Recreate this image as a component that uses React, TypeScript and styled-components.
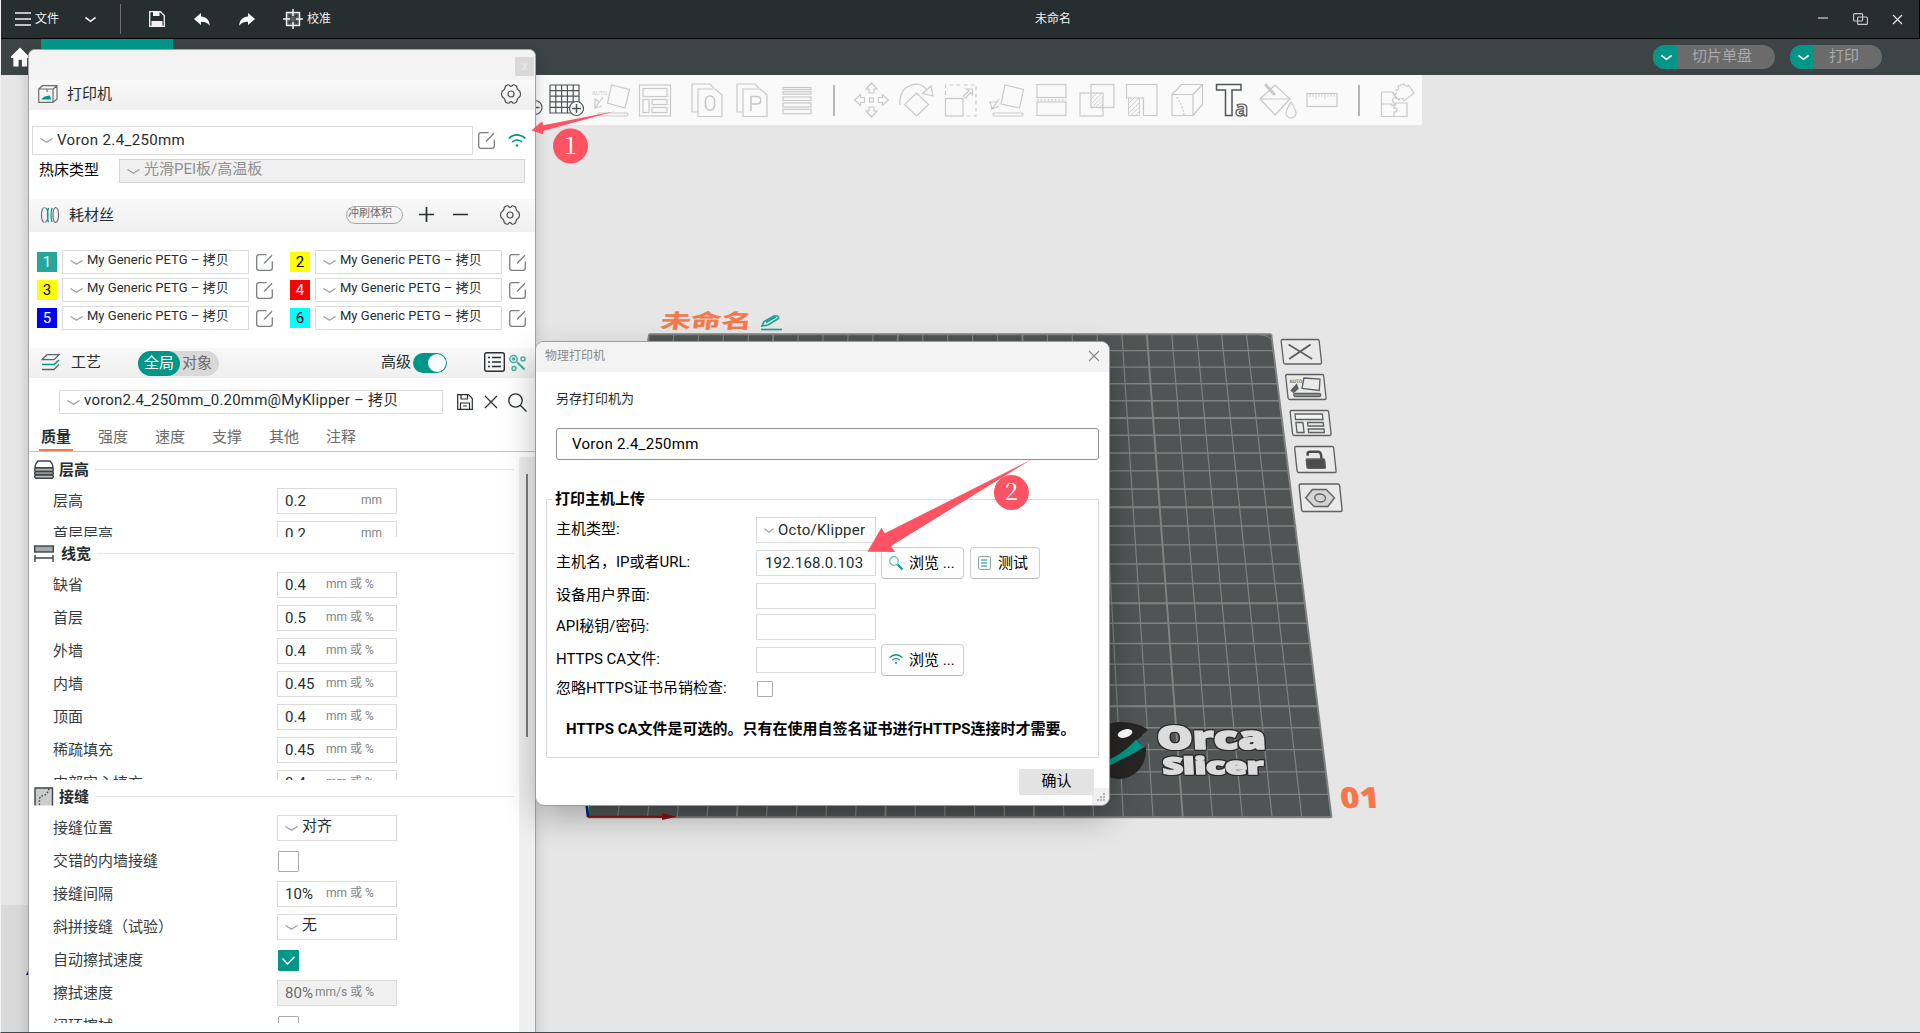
import React from "react";
import styled, { createGlobalStyle } from "styled-components";

const TEAL = "#009688";
const RED = "#ff5364";
const ORANGE = "#f4784a";

const Global = createGlobalStyle`
  * { box-sizing: border-box; }
  html, body { margin: 0; padding: 0; overflow: hidden; }
  body {
    font-family: Roboto, "Noto Sans CJK SC", sans-serif;
    font-size: 15px;
    line-height: 20px;
    color: #262e30;
    white-space: nowrap;
  }
`;

const Page = styled.div`
  position: relative;
  width: 1920px;
  height: 1033px;
  overflow: hidden;
  background: #e6e6e6;
  display: flex;
  flex-direction: column;
  border-left: 1px solid #f2f2f2;
  border-bottom: 1px solid #45484b;
`;

const Icon = styled.svg<{ $w: number; $h?: number }>`
  display: block;
  flex: none;
  width: ${(p) => p.$w}px;
  height: ${(p) => p.$h ?? p.$w}px;
  fill: none;
  stroke: currentColor;
  overflow: visible;
`;

const Gap = styled.div<{ $s: number }>`
  flex: none;
  width: ${(p) => p.$s}px;
`;
const VGap = styled.div<{ $s: number }>`
  flex: none;
  height: ${(p) => p.$s}px;
`;
const Grow = styled.div`
  flex: 1;
`;

const Txt = styled.span<{ $size?: number; $color?: string; $ls?: number; $bold?: boolean; $up?: number }>`
  font-size: ${(p) => p.$size ?? 15}px;
  color: ${(p) => p.$color ?? "inherit"};
  letter-spacing: ${(p) => p.$ls ?? 0}px;
  font-weight: ${(p) => (p.$bold ? 700 : 400)};
  padding-bottom: ${(p) => (p.$up ?? 0) * 2}px;
`;

/* ---------- Window title bar ---------- */

const TitleBar = styled.header`
  height: 39px;
  flex: none;
  display: flex;
  align-items: center;
  background: #272e30;
  border-bottom: 1px solid #000;
  border-right: 1px solid #000;
  color: #f2f2f2;
  font-size: 12px;
`;
const VRule = styled.div`
  width: 1px;
  height: 30px;
  background: #6c7274;
`;

const Chevron = ({ w = 12, c = "#a0a0a0", s = 1.2 }: { w?: number; c?: string; s?: number }) => (
  <Icon $w={w} $h={5} viewBox="0 0 12 5" preserveAspectRatio="none" style={{ color: c }}>
    <path d="M0.4 .5 Q3 2.2 6 4.3 Q9 2.2 11.6 .5" strokeWidth={s} />
  </Icon>
);

const AppTitleBar = () => (
  <TitleBar>
    <Gap $s={14} />
    <Icon $w={16} $h={14} viewBox="0 0 16 14">
      <path d="M0 1H16M0 7H16M0 13H16" strokeWidth="1.4" />
    </Icon>
    <Gap $s={4} />
    <Txt $size={12}>文件</Txt>
    <Gap $s={26} />
    <Chevron w={11} c="#eee" s={1.5} />
    <Gap $s={24} />
    <VRule />
    <Gap $s={28} />
    <Icon $w={16} viewBox="0 0 16 16">
      <path d="M.7 .7H11.5L15.3 4.5V15.3H.7Z" strokeWidth="1.3" />
      <path d="M4 .7H10.500V5H4ZM2.500 10H13.500V15H2.500Z" fill="#f2f2f2" stroke="none" />
    </Icon>
    <Gap $s={29} />
    <Icon $w={16} $h={13} viewBox="0 0 16 13">
      <path d="M7 0V3.6C12 3.8 15.5 7 15.8 12.8C13.8 9.6 11 8.6 7 8.7V12L0 6Z" fill="#fff" stroke="none" />
    </Icon>
    <Gap $s={29} />
    <Icon $w={16} $h={13} viewBox="0 0 16 13">
      <path d="M9 0V3.6C4 3.8 .5 7 .2 12.8C2.2 9.6 5 8.6 9 8.7V12L16 6Z" fill="#fff" stroke="none" />
    </Icon>
    <Gap $s={28} />
    <Icon $w={20} viewBox="0 0 20 20">
      <rect x="3.5" y="3.5" width="13" height="13" fill="#565b5c" strokeWidth="1.4" />
      <path d="M10 0V7M10 13V20M0 10H7M13 10H20" strokeWidth="1.5" />
      <path d="M6 6L8 8M14 6L12 8M6 14L8 12M14 14L12 12" strokeWidth="1.4" stroke="#272e30" />
    </Icon>
    <Gap $s={4} />
    <Txt $size={12}>校准</Txt>
    <Gap $s={704} />
    <Txt $size={12}>未命名</Txt>
    <Grow />
    <Icon $w={10} $h={2} viewBox="0 0 10 2">
      <path d="M0 0H10" strokeWidth="1" />
    </Icon>
    <Gap $s={25} />
    <Icon $w={15} $h={12} viewBox="0 0 15 12" style={{ color: "#c9cccc" }}>
      <rect x=".6" y=".6" width="9" height="7.4" rx="1" strokeWidth="1.1" />
      <rect x="4.6" y="4" width="9.8" height="7.4" rx="1" strokeWidth="1.1" />
    </Icon>
    <Gap $s={25} />
    <Icon $w={9} viewBox="0 0 9 9">
      <path d="M0 0L9 9M9 0L0 9" strokeWidth="1.1" />
    </Icon>
    <Gap $s={17} />
  </TitleBar>
);

/* ---------- Navigation bar ---------- */

const NavBar = styled.nav`
  height: 36px;
  flex: none;
  display: flex;
  align-items: center;
  background: #3c4446;
  padding-left: 10px;
  padding-right: 38px;
`;
const ActiveTab = styled.div`
  width: 132px;
  height: 36px;
  margin-left: 12px;
  background: ${TEAL};
`;
const Pill = styled.div<{ $w: number }>`
  width: ${(p) => p.$w}px;
  height: 24px;
  margin-left: 15px;
  display: flex;
  border-radius: 12px;
  overflow: hidden;
  background: #6b6b6b;
  color: #a9a9a9;
`;
const PillArrow = styled.div`
  width: 24px;
  display: grid;
  place-items: center;
  background: ${TEAL};
  padding-left: 3px;
`;
const PillText = styled.div`
  flex: 1;
  line-height: 23px;
  text-align: center;
  padding-right: 8px;
`;

const AppNav = () => (
  <NavBar>
    <Icon $w={18} $h={20} viewBox="0 0 19 20">
      <path d="M9.5 0L19 9.5V11H17V20H11.5V13H8V20H2.5V11H0V9.5Z" fill="#fff" stroke="none" />
    </Icon>
    <ActiveTab />
    <Icon $w={330} $h={36} viewBox="172 0 330 36" style={{ color: "#b9bdbd" }}>
      <path d="M85 10.500H88M111 10.500H117M125 10.500H128M217 10.500H220M257 10.500H259M261 10.500H263M342 10.500H351M355 10.500H360M390 10.500H392M475 10.500H491" strokeWidth="1" />
    </Icon>
    <Grow />
    <Pill $w={122}>
      <PillArrow>
        <Chevron w={11} c="#fff" s={1.5} />
      </PillArrow>
      <PillText>切片单盘</PillText>
    </Pill>
    <Pill $w={92}>
      <PillArrow>
        <Chevron w={11} c="#fff" s={1.5} />
      </PillArrow>
      <PillText>打印</PillText>
    </Pill>
  </NavBar>
);

/* ---------- Canvas toolbar ---------- */

const Toolbar = styled.div`
  position: relative;
  z-index: 1;
  height: 50px;
  width: 1221px;
  margin-left: 200px;
  flex: none;
  display: flex;
  align-items: center;
  background: #fafafa;
  padding-left: 326px;
`;
const Tool = styled.div<{ $on?: boolean }>`
  width: 45px;
  height: 50px;
  flex: none;
  display: grid;
  place-items: center;
  color: ${(p) => (p.$on ? "#4f5557" : "#c9c9c9")};
`;
const ToolRule = styled.div`
  width: 2px;
  height: 31px;
  margin: 0 14px;
  flex: none;
  background: #b3b7b7;
`;
const ToolIcon = ({ children, on }: { children: React.ReactNode; on?: boolean }) => (
  <Tool $on={on}>
    <Icon $w={36} viewBox="0 0 36 36" strokeWidth="1.2">
      {children}
    </Icon>
  </Tool>
);

const AppToolbar = () => (
  <Toolbar>
    <Icon $w={15} viewBox="0 0 15 15" strokeWidth="1.200" style={{ color: "#4f5557" }}>
      <circle cx="8" cy="14.500" r="7" />
      <path d="M3.500 14.500H12.500" strokeWidth="1.500" />
    </Icon>
    <ToolIcon on>
      <path d="M3 3H32V22M3 3V31H24M3 8.6H32M3 14.2H32M3 19.8H27M3 25.4H22M8.8 3V31M14.6 3V31M20.4 3V31M26.2 3V20" />
      <circle cx="29.5" cy="26.5" r="7" fill="#fafafa" />
      <path d="M29.5 22V31M25 26.5H34" strokeWidth="1.5" />
    </ToolIcon>
    <ToolIcon>
      <path d="M19.500 3L37.500 7.5L33 26L15.500 21ZM11 15L3 26L10 24M3 26V17L7 20" />
      <rect x="6" y="31" width="30" height="3" rx="1.5" />
      <text x="0" y="13" fontSize="6" fill="currentColor" stroke="none" fontWeight="400">AUTO</text>
    </ToolIcon>
    <ToolIcon>
      <rect x="2.5" y="3" width="31" height="31" />
      <rect x="6" y="6.5" width="24" height="8" />
      <rect x="6" y="17.5" width="6" height="13" />
      <rect x="15" y="17.5" width="15" height="5" />
      <rect x="15" y="25.5" width="15" height="5" />
    </ToolIcon>
    <Gap $s={7} />
    <ToolIcon>
      <path d="M3 2V30H9M3 2H21L25 6" />
      <path d="M9 7H26.5L33 13V34.5H9Z" />
      <rect x="16.5" y="14" width="9" height="14" rx="4.5" strokeWidth="1.6" />
    </ToolIcon>
    <ToolIcon>
      <path d="M3 2H21L25 6M3 2V30H9" />
      <path d="M9 7H26.5L33 13V34.5H9Z" />
      <path d="M17 29V14.5H23C28 14.5 28 22 23 22H17" strokeWidth="1.6" />
    </ToolIcon>
    <ToolIcon>
      <rect x="4" y="5.500" width="28" height="2" />
      <rect x="4" y="9.800" width="28" height="2.400" />
      <rect x="4" y="15" width="28" height="3.500" />
      <rect x="4" y="21" width="28" height="4" />
      <rect x="4" y="27.300" width="28" height="4.400" />
    </ToolIcon>
    <ToolRule />
    <ToolIcon>
      <path d="M17.500 1L23 7H20V11H15V7H12ZM17.500 35L23 29H20V25H15V29H12ZM.500 18L6.500 12.500V15.500H10.500V20.500H6.500V23.500ZM34.500 18L28.500 12.500V15.500H24.500V20.500H28.500V23.500Z" />
      <rect x="15.500" y="16" width="4" height="4" />
    </ToolIcon>
    <ToolIcon>
      <path d="M17.500 11L29.500 22.500L17.500 34L5.500 22.500ZM1 23V17C3 3 20 -3 28 8M23.500 11.500L34 14L32 4Z" />
    </ToolIcon>
    <ToolIcon>
      <rect x="1.500" y="16.500" width="17.500" height="17.500" />
      <path d="M1.500 13V3H32V34H22" strokeDasharray="4 3" />
      <path d="M19.500 14L25 8.500L22.500 7H28.500V13L26.500 10.500L21.500 16Z" />
    </ToolIcon>
    <ToolIcon>
      <path d="M16 3L34.500 7.500L30.500 26L12 22Z" />
      <path d="M10 17L3 27L10 24M3 27L1 20H9" />
      <rect x="4" y="31" width="30" height="3" rx="1.500" />
    </ToolIcon>
    <ToolIcon>
      <rect x="3" y="2.500" width="29" height="13" />
      <rect x="3" y="20" width="29" height="13.500" />
      <path d="M3 17.800H32" strokeDasharray="2 1.500" />
    </ToolIcon>
    <ToolIcon>
      <rect x="1" y="11" width="23" height="23" />
      <rect x="12" y="2.500" width="23" height="23" />
      <path d="M13 16L18 11M13 21L23 11M13 25L23.500 15M17 25L23.500 19M21 25L24 22" strokeWidth=".8" />
    </ToolIcon>
    <ToolIcon>
      <path d="M2.500 2.500H33V33.500H19.500V16H2.500Z" />
      <path d="M4.500 16V33.500H15.500V16M5 21L10 16M5 26L15 16M5 31L15 21M7 33L15 26M12 33L15 30" strokeWidth=".9" />
    </ToolIcon>
    <ToolIcon>
      <path d="M3 12.500H24V33.500H3ZM3 12.500L12.500 2.500H33.500L24 12.500M33.500 2.500V22.500L24 33.500" />
      <path d="M8 15L10 19L12 22L14 28L15 33" strokeDasharray="2 1.500" />
    </ToolIcon>
    <ToolIcon on>
      <path d="M2.500 2.500H27V8H18V33.500H11.500V8H2.500Z" strokeWidth="1.500" />
      <text x="21" y="33.500" fontSize="22" fontWeight="700" fill="#fafafa" strokeWidth="1.200" fontFamily="Open Sans">a</text>
    </ToolIcon>
    <ToolIcon>
      <path d="M1 17L16 3L31 17L16 33ZM1 17H31" />
      <path d="M6 2L16 13" strokeWidth="3" />
      <path d="M32 20C36 26 37 28 37 31A5 5 0 0 1 27 31C27 28 29 25 32 20Z" fill="#fafafa" />
    </ToolIcon>
    <ToolIcon>
      <rect x="3" y="11.500" width="30" height="13" />
      <path d="M6 12V15M9 12V15M12 12V17M15 12V15M18 12V15M21 12V17M24 12V15M27 12V15M30 12V15" strokeWidth=".9" />
    </ToolIcon>
    <ToolRule />
    <ToolIcon>
      <path d="M2.500 10H14C13 14 18 14 17 10M2.500 10V34.500H28V21H17C17 24 12 24 12 22H2.500M15 34.500V30C19 30 19 25 15 26V21C12 18 14 15 17 16L14 10" />
      <path d="M16 8C18 9 21 7 19 4L25 2C27 6 30 4 29 2.500L35 11L25 19C24 15 20 16 20 18L15 13" />
    </ToolIcon>
  </Toolbar>
);

/* ---------- 3D scene ---------- */

const Scene = styled.svg`
  position: absolute;
  left: -1px;
  top: 0;
  width: 1920px;
  height: 1033px;
`;

const BED = { tl: 649, tr: 1271.3, bl: 588, br: 1331.5, top: 334.3, bottom: 817.3 };
const CELLS = 25;
const rowY = (i: number) => {
  const s = i / CELLS;
  return BED.top + (BED.bottom - BED.top) * (s / ((1 - s) * 1.194 + s));
};
const edge = (y: number, a: number, b: number) => a + ((b - a) * (y - BED.top)) / (BED.bottom - BED.top);
const lines = Array.from({ length: CELLS + 1 }, (_, i) => i);

const PlateButton = ({ x, y, w, h, children }: { x: number; y: number; w: number; h: number; children: React.ReactNode }) => (
  <g transform={`matrix(${w / 38} 0 ${0.11} ${h / 25} ${x} ${y})`} fill="none" stroke="#5e6061" strokeWidth="1.3">
    <rect x="0" y="0" width="38" height="25" rx="1.5" fill="#eaeaea" />
    {children}
  </g>
);

const Logo = () => (
  <>
    <text transform="translate(1157.500 749) skewX(3)" fontSize="32" textLength="109" lengthAdjust="spacingAndGlyphs">Orca</text>
    <text transform="translate(1163 774) skewX(3)" fontSize="23" textLength="101" lengthAdjust="spacingAndGlyphs">Slicer</text>
  </>
);

const Plate = () => (
  <Scene viewBox="0 0 1920 1033">
    <rect x="1" y="905" width="28" height="127" fill="#d9d9d9" />
    <path d="M26 975L30 967V975Z" fill="#0018b0" />
    <path d={`M${BED.tl} ${BED.top}H${BED.tr}L${BED.br} ${BED.bottom}H${BED.bl}Z`} fill="#505455" />
    <g stroke="#7f8480" fill="none">
      {lines.map((i) => {
        const y = rowY(i);
        return (
          <path key={"h" + i} d={`M${edge(y, BED.tl, BED.bl)} ${y}H${edge(y, BED.tr, BED.br)}`} strokeWidth={i % 5 ? 1.4 : 2} />
        );
      })}
      {lines.map((i) => (
        <path
          key={"v" + i}
          d={`M${BED.tl + ((BED.tr - BED.tl) * i) / CELLS} ${BED.top}L${BED.bl + ((BED.br - BED.bl) * i) / CELLS} ${BED.bottom}`}
          strokeWidth={i % 5 ? 1.2 : 1.9}
        />
      ))}
      <path d="M1258 334.500Q1269 335 1272.500 341" strokeWidth="1" />
    </g>

    <ellipse cx="1119" cy="750.500" rx="27" ry="28.500" fill="#272524" />
    <path d="M1119 722C1132 722 1142 725 1148.500 730L1136 739L1125 742Z" fill="#272524" />
    <path d="M1149 730L1137 740L1143.500 748L1150 742Z" fill="#505455" />
    <path d="M1136 739.500L1143.500 747.500C1132 755 1120 759 1108 767V760C1118 756 1130 747 1136 739.500Z" fill={TEAL} />
    <ellipse cx="1125" cy="733.500" rx="7.500" ry="4" fill="#fff" transform="rotate(-16 1125 733.500)" />
    <g
      fontFamily="Open Sans"
      fontWeight="800"
      fill="#dcdcdc"
      stroke="#dcdcdc"
      strokeWidth="1.600"
      style={{ filter: "drop-shadow(1px 0 0 #2b2b2b) drop-shadow(-1px 0 0 #2b2b2b) drop-shadow(0 1px 0 #2b2b2b) drop-shadow(0 -1px 0 #2b2b2b)" }}
    >
      <Logo />
    </g>
    <text transform="translate(1341 808) skewX(5)" fontFamily="Open Sans" fontWeight="800" fontSize="29" fill={ORANGE} textLength="39" lengthAdjust="spacingAndGlyphs">01</text>

    <text transform="translate(660 327.500) skewX(-7) scale(1 .7)" fontFamily="Noto Sans CJK SC" fontWeight="700" fontSize="28" fill={ORANGE} stroke={ORANGE} strokeWidth=".4" textLength="91" lengthAdjust="spacingAndGlyphs">未命名</text>
    <g fill="none" stroke="#1fa294" strokeWidth="1.700">
      <path d="M761 329.500H782" />
      <path d="M762 326L764 321.500L774 316Q779 315 778.500 318.500L768 325ZM766 322.500L776 316.800" />
    </g>

    <path d="M588 817L585.500 795" stroke="#001a8c" strokeWidth="2.500" />
    <path d="M590 815V800" stroke="#0b8a1c" strokeWidth="1.500" />
    <path d="M588 816.800H664" stroke="#8c0f0f" strokeWidth="2" />
    <path d="M662 813L677 816.800L662 820Z" fill="#8c0f0f" />

    <PlateButton x={1281} y={339.5} w={38} h={24.500}>
      <path d="M7 5L29 20M29 5L6 20" strokeWidth="1.800" />
    </PlateButton>
    <PlateButton x={1285.500} y={374.500} w={38} h={25}>
      <path d="M18 3.500L34 4.500L32 16L15 14Z" />
      <path d="M4 16L10 10L11 14L6 18Z" fill="#5e6061" />
      <rect x="6" y="19" width="27" height="3" rx="1.500" fill="#999" />
      <text x="3" y="9" fontSize="5" fill="#777" stroke="none" fontWeight="700">AUTO</text>
    </PlateButton>
    <PlateButton x={1290} y={410.500} w={38.500} h={25}>
      <rect x="4.500" y="3.500" width="27" height="5.500" fill="#f4f4f4" />
      <rect x="4.500" y="12" width="7" height="10" />
      <rect x="16" y="12" width="15.500" height="3.500" />
      <rect x="16" y="18.500" width="15.500" height="3.500" />
    </PlateButton>
    <PlateButton x={1294.500} y={446.500} w={39} h={26}>
      <rect x="10" y="12" width="18" height="9" rx="1" fill="#4a4c4d" />
      <path d="M12 9V7Q12 5 15 5H22Q25 5 25 8V12" strokeWidth="2.400" stroke="#4a4c4d" />
    </PlateButton>
    <PlateButton x={1299} y={484} w={40.500} h={27.500}>
      <path d="M12 5H25L32 12.500L25 20.500H12L5 12.500Z" fill="#d4d4d4" />
      <ellipse cx="18.500" cy="12.700" rx="5" ry="3.600" />
    </PlateButton>
  </Scene>
);

/* ---------- Settings panel ---------- */

const Panel = styled.aside`
  position: absolute;
  z-index: 2;
  left: 27px;
  top: 49px;
  width: 508px;
  height: 983px;
  display: flex;
  flex-direction: column;
  overflow: hidden;
  background: #fff;
  border: 1px solid #a3a3a3;
  border-bottom: 0;
  border-radius: 7px 7px 0 0;
`;
const PanelShadow = styled.div`
  position: absolute;
  z-index: 1;
  left: 28px;
  top: 56px;
  width: 506px;
  height: 990px;
  box-shadow: 0 0 14px rgba(0, 0, 0, 0.2);
`;
const PanelTitle = styled.div`
  height: 30px;
  flex: none;
  display: flex;
  justify-content: flex-end;
  padding: 7px 1px 0 0;
  background: #f3f3f3;
`;
const PanelClose = styled.div`
  width: 19px;
  height: 19px;
  background: #d9d9d9;
  color: #ededed;
  font-size: 12px;
  line-height: 18px;
  text-align: center;
`;
const Head = styled.div<{ $h: number }>`
  height: ${(p) => p.$h}px;
  flex: none;
  display: flex;
  align-items: center;
  padding-bottom: 2px;
  background: linear-gradient(#f9f9f9, #efefef);
`;
const Line = styled.div`
  flex: none;
  display: flex;
  align-items: center;
`;
const Combo = styled.div<{ $w: number; $h: number; $off?: boolean }>`
  width: ${(p) => p.$w}px;
  height: ${(p) => p.$h}px;
  flex: none;
  display: flex;
  align-items: center;
  padding-left: 7px;
  gap: 4px;
  border: 1px solid ${(p) => (p.$off ? "#d6d6d6" : "#dbdbdb")};
  background: ${(p) => (p.$off ? "#f0f0f0" : "#fff")};
  color: ${(p) => (p.$off ? "#909090" : "#262e30")};
`;
const Swatch = styled.div<{ $bg: string; $fg: string }>`
  width: 20px;
  height: 20px;
  line-height: 20px;
  text-align: center;
  font-size: 15px;
  background: ${(p) => p.$bg};
  color: ${(p) => p.$fg};
`;
const PurgeButton = styled.div`
  width: 57px;
  height: 18px;
  border: 1px solid #a6a6a6;
  border-radius: 9px;
  font-size: 11px;
  line-height: 13px;
  padding-left: 1px;
  color: #6b6b6b;
`;
const Segment = styled.div`
  width: 81px;
  height: 25px;
  margin-top: 2px;
  display: flex;
  border-radius: 13px;
  background: #d9d9d9;
  color: #6b6b6b;
  line-height: 24px;
`;
const SegmentOn = styled.div`
  width: 42px;
  margin-right: 2px;
  border-radius: 13px;
  background: ${TEAL};
  color: #fff;
  text-align: center;
`;
const Switch = styled.div`
  width: 34px;
  height: 20px;
  margin-top: 2px;
  padding: 1px;
  display: flex;
  justify-content: flex-end;
  border-radius: 10px;
  background: ${TEAL};
  &::after {
    content: "";
    width: 18px;
    height: 18px;
    border-radius: 9px;
    background: #fff;
  }
`;

const Gear = () => (
  <Icon $w={20} viewBox="0 0 20 20" strokeWidth="1.200" style={{ color: "#4a4f50" }}>
    <path d="M6.300 1Q8 .200 8.700 1.800Q10 2.800 11.300 1.800Q12 .200 13.700 1L15.600 2.200Q16 4.800 17 5.700Q19.600 7 19.500 10Q19.600 13 17 14.300Q16 15.200 15.600 17.800L13.700 19Q12 19.800 11.300 18.200Q10 17.200 8.700 18.200Q8 19.800 6.300 19L4.400 17.800Q4 15.200 3 14.300Q.400 13 .500 10Q.400 7 3 5.700Q4 4.800 4.400 2.200Z" />
    <circle cx="10" cy="10" r="3" />
  </Icon>
);
const EditIcon = () => (
  <Icon $w={17} viewBox="0 0 17 17" strokeWidth="1.300" style={{ color: "#7a7e7f" }}>
    <path d="M10.500 .700H3Q.700 .700 .700 3V14Q.700 16.300 3 16.300H14Q16.300 16.300 16.300 14V7.500" />
    <path d="M8 9.500L16 1.200" />
  </Icon>
);
const Wifi = ({ w = 18 }: { w?: number }) => (
  <Icon $w={w} $h={(w * 13) / 18} viewBox="0 0 18 13" strokeWidth="1.600" style={{ color: TEAL }}>
    <path d="M.600 4.500Q9 -2.600 17.400 4.500M4 8Q9 4 14 8" />
    <circle cx="9" cy="11.500" r="1.200" fill={TEAL} stroke="none" />
  </Icon>
);

const FILAMENTS: [string, string][] = [
  ["#26a69a", "#fff"],
  ["#ffff00", "#000"],
  ["#ffff00", "#000"],
  ["#ff0000", "#fff"],
  ["#0000ff", "#fff"],
  ["#00ffff", "#000"],
];
const FilamentGrid = styled.div`
  flex: none;
  display: grid;
  grid-template-columns: 253px 253px;
  grid-auto-rows: 28px;
  padding-left: 8px;
`;
const FilamentCell = styled.div`
  height: 24px;
  display: flex;
  align-items: center;
`;

const TabRow = styled.div`
  height: 38px;
  flex: none;
  display: flex;
  padding: 9px 0 0 10px;
  gap: 23px;
  border-bottom: 1px solid #c4c4c4;
`;
const Tab = styled.div<{ $on?: boolean }>`
  width: 34px;
  height: 28px;
  line-height: 29px;
  padding-left: 2px;
  color: ${(p) => (p.$on ? "#262e30" : "#6b6b6b")};
  font-weight: ${(p) => (p.$on ? 700 : 400)};
  border-bottom: 2px solid ${(p) => (p.$on ? ORANGE : "transparent")};
`;

const Settings = styled.div`
  flex: 1;
  min-height: 0;
  display: flex;
`;
const Sections = styled.div`
  width: 490px;
  display: flex;
  flex-direction: column;
  padding-top: 1px;
`;
const Track = styled.div`
  width: 16px;
  margin-top: 5px;
  background: #efefef;
  padding: 17px 0 0 7px;
`;
const Thumb = styled.div`
  width: 2px;
  height: 263px;
  background: #7c7c7c;
`;
const SectionHead = styled.div`
  height: 32px;
  flex: none;
  display: flex;
  align-items: center;
  padding: 1px 5px 0;
`;
const SectionRule = styled.div`
  flex: 1;
  height: 1px;
  margin-left: 6px;
  background: #e6e6e6;
`;
const SectionBody = styled.div<{ $h: number }>`
  height: ${(p) => p.$h}px;
  flex: none;
  overflow: hidden;
`;
const Option = styled.div`
  height: 33px;
  display: flex;
  align-items: center;
  padding: 0 0 1px 24px;
`;
const OptionLabel = styled.div`
  width: 224px;
  color: #363c3e;
`;
const Field = styled.div<{ $off?: boolean }>`
  width: 120px;
  height: 26px;
  display: flex;
  align-items: center;
  padding-left: 7px;
  border: 1px solid #dbdbdb;
  background: ${(p) => (p.$off ? "#f0f0f0" : "#fff")};
  color: ${(p) => (p.$off ? "#6b6b6b" : "#262e30")};
`;
const FieldValue = styled.div<{ $w: number }>`
  width: ${(p) => p.$w}px;
  letter-spacing: 0.1px;
`;
const Unit = styled.div`
  color: #808486;
  font-size: 12px;
  padding-bottom: 3px;
`;
const Check = styled.div<{ $on?: boolean; $s?: number }>`
  width: ${(p) => p.$s ?? 21}px;
  height: ${(p) => p.$s ?? 21}px;
  margin-left: 1px;
  display: grid;
  place-items: center;
  border: 1px solid ${(p) => (p.$on ? TEAL : "#ababab")};
  border-radius: 1px;
  background: ${(p) => (p.$on ? TEAL : "#fff")};
  color: #fff;
`;

type Opt = { label: string; value?: string; unit?: string; kind?: "combo" | "check" | "on" | "off" };
const OptionRow = ({ label, value, unit = "mm 或 %", kind }: Opt) => (
  <Option>
    <OptionLabel>{label}</OptionLabel>
    {kind === "combo" ? (
      <Combo $w={120} $h={26}>
        <Chevron w={13} />
        <Txt $up={2}>{value}</Txt>
      </Combo>
    ) : kind === "check" ? (
      <Check />
    ) : kind === "on" ? (
      <Check $on>
        <Icon $w={13} $h={9} viewBox="0 0 13 9">
          <path d="M.500 2.500L5.500 8L12.500 .800" strokeWidth="1.500" />
        </Icon>
      </Check>
    ) : (
      <Field $off={kind === "off"}>
        <FieldValue $w={unit === "mm" ? 76 : kind === "off" ? 30 : 41}>{value}</FieldValue>
        <Unit>{unit}</Unit>
      </Field>
    )}
  </Option>
);

const SECTIONS: { title: string; height: number; icon: React.ReactNode; gap: number; rows: Opt[] }[] = [
  {
    title: "层高",
    height: 52,
    gap: 5,
    icon: (
      <>
        <path d="M1 8Q1 4 4 1H16Q19 4 19 8Z" />
        <rect x=".700" y="8" width="18.600" height="3.500" rx="1.500" fill="#bbb" />
        <rect x=".700" y="11.500" width="18.600" height="3.500" rx="1.500" fill="#999" />
        <rect x=".700" y="15" width="18.600" height="3.300" rx="1.500" fill="#bbb" />
      </>
    ),
    rows: [
      { label: "层高", value: "0.2", unit: "mm" },
      { label: "首层层高", value: "0.2", unit: "mm" },
    ],
  },
  {
    title: "线宽",
    height: 211,
    gap: 7,
    icon: (
      <>
        <rect x=".700" y="2" width="18.600" height="6" fill="#a5a8a9" />
        <path d="M1 11V18M19 11V18M1 14H19" />
      </>
    ),
    rows: [
      { label: "缺省", value: "0.4" },
      { label: "首层", value: "0.5" },
      { label: "外墙", value: "0.4" },
      { label: "内墙", value: "0.45" },
      { label: "顶面", value: "0.4" },
      { label: "稀疏填充", value: "0.45" },
      { label: "内部实心填充", value: "0.4" },
    ],
  },
  {
    title: "接缝",
    height: 211,
    gap: 5,
    icon: (
      <>
        <path d="M1 18.500V1H18.500V18.500" fill="#ccc" />
        <path d="M5.500 18V12Q6 9 9.500 8.500Q14 7 15 1.500" strokeDasharray="1.600 1.600" />
      </>
    ),
    rows: [
      { label: "接缝位置", value: "对齐", kind: "combo" },
      { label: "交错的内墙接缝", kind: "check" },
      { label: "接缝间隔", value: "10%" },
      { label: "斜拼接缝（试验）", value: "无", kind: "combo" },
      { label: "自动擦拭速度", kind: "on" },
      { label: "擦拭速度", value: "80%", unit: "mm/s 或 %", kind: "off" },
      { label: "闭环擦拭", kind: "check" },
    ],
  },
];

const SettingsPanel = () => (
  <>
    <PanelShadow />
    <Panel>
      <PanelTitle>
        <PanelClose>x</PanelClose>
      </PanelTitle>
      <Head $h={30}>
        <Gap $s={9} />
        <Icon $w={20} $h={18} viewBox="0 0 20 18" strokeWidth="1.200" style={{ color: "#6b6f70" }}>
          <path d="M.700 4H15V17.300H.700ZM.700 4L4.500 .700H19V14L15 17.300M15 4L19 .700M9 4V7" />
          <path d="M3.500 14.500Q5 11 12 10.500L13 14.500Z" fill={TEAL} stroke="none" />
        </Icon>
        <Gap $s={9} />
        <Txt>打印机</Txt>
        <Grow />
        <Gear />
        <Gap $s={14} />
      </Head>
      <VGap $s={16} />
      <Line>
        <Gap $s={3} />
        <Combo $w={441} $h={29}>
          <Chevron w={13} />
          <Txt $ls={0.38} $up={1}>Voron 2.4_250mm</Txt>
        </Combo>
        <Gap $s={5} />
        <EditIcon />
        <Gap $s={13} />
        <Wifi />
      </Line>
      <VGap $s={4} />
      <Line>
        <Gap $s={10} />
        <Txt $color="#000" $up={1}>热床类型</Txt>
        <Gap $s={20} />
        <Combo $w={406} $h={24} $off>
          <Chevron w={13} />
          <Txt $up={2}>光滑PEI板/高温板</Txt>
        </Combo>
      </Line>
      <VGap $s={16} />
      <Head $h={33}>
        <Gap $s={12} />
        <Icon $w={18} $h={16} viewBox="0 0 18 16" strokeWidth="1.200" style={{ color: "#6b6f70" }}>
          <path d="M3.500 .500Q.500 1 .500 8Q.500 15 3.500 15.500M14.500 .500Q17.500 1 17.500 8Q17.500 15 14.500 15.500Q12 15 12 8Q12 1 14.500 .500" />
          <path d="M4.500 .800Q7 2 7 8Q7 14 4.500 15.200M7.500 .800Q5.500 8 7.500 15.200M11 .800Q9 8 11 15.200" stroke={TEAL} />
        </Icon>
        <Gap $s={10} />
        <Txt>耗材丝</Txt>
        <Grow />
        <PurgeButton>冲刷体积</PurgeButton>
        <Gap $s={16} />
        <Icon $w={15} viewBox="0 0 15 15" strokeWidth="1.700">
          <path d="M0 7.500H15M7.500 0V15" />
        </Icon>
        <Gap $s={19} />
        <Icon $w={15} viewBox="0 0 15 15" strokeWidth="1.700">
          <path d="M0 7.500H15" />
        </Icon>
        <Gap $s={32} />
        <Gear />
        <Gap $s={15} />
      </Head>
      <VGap $s={18} />
      <FilamentGrid>
        {FILAMENTS.map(([bg, fg], i) => (
          <FilamentCell key={i}>
            <Swatch $bg={bg} $fg={fg}>{i + 1}</Swatch>
            <Gap $s={5} />
            <Combo $w={187} $h={24}>
              <Chevron w={13} />
              <Txt $size={13} $ls={0.02} $up={2}>My Generic PETG – 拷贝</Txt>
            </Combo>
            <Gap $s={7} />
            <EditIcon />
          </FilamentCell>
        ))}
      </FilamentGrid>
      <VGap $s={14} />
      <Head $h={30}>
        <Gap $s={12} />
        <Icon $w={19} $h={17} viewBox="0 0 19 17" strokeWidth="1.300" style={{ color: "#5e6465" }}>
          <path d="M6 .700H18L13 5.700H1Z" />
          <path d="M1 10.500H13L18 6" stroke={TEAL} strokeWidth="1.600" />
          <path d="M1 15.500H13L18 10.500" />
        </Icon>
        <Gap $s={11} />
        <Txt>工艺</Txt>
        <Gap $s={37} />
        <Segment>
          <SegmentOn>全局</SegmentOn>对象
        </Segment>
        <Grow />
        <Txt>高级</Txt>
        <Gap $s={2} />
        <Switch />
        <Gap $s={37} />
        <Icon $w={21} $h={20} viewBox="0 0 21 20" strokeWidth="1.400">
          <rect x=".700" y=".700" width="19.600" height="18.600" rx="2" />
          <path d="M4 5.500H6M8 5.500H17M4 10H6M8 10H17M4 14.500H6M8 14.500H17" />
        </Icon>
        <Gap $s={4} />
        <Icon $w={17} viewBox="0 0 17 17" strokeWidth="1.500" style={{ color: "#45b0a6" }}>
          <circle cx="4.500" cy="5" r="3.600" />
          <circle cx="4.500" cy="5" r="1" />
          <circle cx="14" cy="5" r="2" />
          <circle cx="5" cy="14.500" r="2" />
          <path d="M8 8L15.500 15.500" strokeWidth="2.200" />
        </Icon>
        <Gap $s={9} />
      </Head>
      <VGap $s={12} />
      <Line>
        <Gap $s={30} />
        <Combo $w={384} $h={24}>
          <Chevron w={13} />
          <Txt $ls={0.22} $up={2}>voron2.4_250mm_0.20mm@MyKlipper – 拷贝</Txt>
        </Combo>
        <Gap $s={14} />
        <Icon $w={16} viewBox="0 0 16 16" strokeWidth="1.200">
          <path d="M.700 .700H11.500L15.300 4.500V15.300H.700ZM4 .700V5H10.500V.700M3.500 15.300V9H12.500V15.300M6 12H10" />
        </Icon>
        <Gap $s={12} />
        <Icon $w={12} viewBox="0 0 13 13" strokeWidth="1.300">
          <path d="M0 0L13 13M13 0L0 13" />
        </Icon>
        <Gap $s={11} />
        <Icon $w={19} viewBox="0 0 19 19" strokeWidth="1.300">
          <circle cx="7.500" cy="7.500" r="6.700" />
          <path d="M12.300 12.300L18.500 18.500" />
        </Icon>
      </Line>
      <TabRow>
        {["质量", "强度", "速度", "支撑", "其他", "注释"].map((t, i) => (
          <Tab key={t} $on={i === 0}>{t}</Tab>
        ))}
      </TabRow>
      <Settings>
        <Sections>
          {SECTIONS.map((s) => (
            <React.Fragment key={s.title}>
              <SectionHead>
                <Icon $w={20} $h={19} viewBox="0 0 20 19" strokeWidth="1.400" style={{ color: "#3c4446" }}>
                  {s.icon}
                </Icon>
                <Gap $s={s.gap} />
                <Txt $bold>{s.title}</Txt>
                <SectionRule />
              </SectionHead>
              <SectionBody $h={s.height}>
                {s.rows.map((r) => (
                  <OptionRow key={r.label} {...r} />
                ))}
              </SectionBody>
            </React.Fragment>
          ))}
        </Sections>
        <Track>
          <Thumb />
        </Track>
      </Settings>
    </Panel>
  </>
);

/* ---------- Physical printer dialog ---------- */

const Dialog = styled.section`
  position: absolute;
  z-index: 3;
  left: 534px;
  top: 341px;
  width: 575px;
  height: 465px;
  display: flex;
  flex-direction: column;
  overflow: hidden;
  background: #fff;
  border: 1px solid #9a9a9a;
  border-radius: 9px;
  color: #000;
`;
const DialogShadow = styled.div`
  position: absolute;
  z-index: 3;
  left: 536px;
  top: 344px;
  width: 571px;
  height: 458px;
  border-radius: 9px;
  box-shadow: 0 14px 34px rgba(0, 0, 0, 0.3);
`;
const DialogTitle = styled.div`
  height: 30px;
  flex: none;
  display: flex;
  align-items: center;
  justify-content: space-between;
  padding: 0 10px 2px 9px;
  background: #f3f3f3;
  color: #8a8a8a;
  font-size: 12px;
`;
const NameLabel = styled.div`
  margin: 17px 0 0 20px;
  font-size: 13px;
  color: #262e30;
`;
const NameInput = styled.div`
  width: 543px;
  height: 32px;
  margin: 19px 0 0 20px;
  padding-left: 15px;
  line-height: 30px;
  border: 1px solid #8f8f8f;
  border-radius: 3px;
  letter-spacing: 0.28px;
`;
const Group = styled.div`
  width: 553px;
  height: 259px;
  margin: 39px 0 0 10px;
  border: 1px solid #dbdbdb;
  display: flex;
  flex-direction: column;
`;
const GroupTitle = styled.div`
  align-self: flex-start;
  height: 20px;
  margin: -12px 0 0 5px;
  padding: 0 3px;
  line-height: 22px;
  background: #fff;
  font-weight: 700;
`;
const FormRow = styled.div<{ $h: number }>`
  height: ${(p) => p.$h}px;
  display: flex;
  align-items: center;
  padding: 0 0 1px 9px;
`;
const FormLabel = styled.div`
  width: 200px;
  padding-bottom: 2px;
`;
const FormField = styled.div`
  width: 120px;
  height: 26px;
  line-height: 24px;
  padding-left: 8px;
  border: 1px solid #dbdbdb;
  color: #262e30;
  letter-spacing: 0.16px;
`;
const FormButton = styled.div<{ $w: number; $ml: number; $gap: number }>`
  width: ${(p) => p.$w}px;
  height: 32px;
  margin-left: ${(p) => p.$ml}px;
  padding: 0 0 1px 7px;
  display: flex;
  align-items: center;
  gap: ${(p) => p.$gap}px;
  border: 1px solid #cfcfcf;
  border-bottom-color: #b8b8b8;
  border-radius: 4px;
  background: #fdfdfd;
`;
const Note = styled.div`
  margin: 17px 0 0 19px;
  font-weight: 700;
`;
const Confirm = styled.div`
  width: 75px;
  height: 26px;
  margin: 11px 15px 0 auto;
  line-height: 25px;
  text-align: center;
  background: #e3e3e3;
`;
const Grip = styled.div`
  position: absolute;
  right: 0;
  bottom: 0;
  width: 17px;
  height: 17px;
  display: grid;
  place-items: center;
  background: #efefef;
  z-index: -1;
`;

const PrinterDialog = () => (
  <>
    <DialogShadow />
    <Dialog>
      <DialogTitle>
        <span>物理打印机</span>
        <Icon $w={10} viewBox="0 0 10 10" strokeWidth="1.100">
          <path d="M0 0L10 10M10 0L0 10" />
        </Icon>
      </DialogTitle>
      <NameLabel>另存打印机为</NameLabel>
      <NameInput>Voron 2.4_250mm</NameInput>
      <Group>
        <GroupTitle>打印主机上传</GroupTitle>
        <VGap $s={8} />
        <FormRow $h={29}>
          <FormLabel>主机类型:</FormLabel>
          <Combo $w={120} $h={26}>
            <Chevron w={10} />
            <Txt $ls={0.25}>Octo/Klipper</Txt>
          </Combo>
        </FormRow>
        <FormRow $h={37}>
          <FormLabel>主机名，IP或者URL:</FormLabel>
          <FormField>192.168.0.103</FormField>
          <FormButton $w={83} $ml={5} $gap={6}>
            <Icon $w={14} viewBox="0 0 14 14" style={{ color: "#5fbdb3" }}>
              <circle cx="5" cy="5" r="4.300" strokeWidth="1.200" />
              <path d="M8.500 8.500L13.500 13.500" stroke={TEAL} strokeWidth="2" />
            </Icon>
            浏览 ...
          </FormButton>
          <FormButton $w={70} $ml={6} $gap={7}>
            <Icon $w={13} $h={14} viewBox="0 0 13 14" style={{ color: "#8a9a9a" }}>
              <rect x=".600" y=".600" width="11.800" height="12.800" rx="1" />
              <path d="M3 4H9M3 7H9M3 10H9" stroke={TEAL} strokeWidth="1.200" />
            </Icon>
            测试
          </FormButton>
        </FormRow>
        <FormRow $h={29}>
          <FormLabel>设备用户界面:</FormLabel>
          <FormField />
        </FormRow>
        <FormRow $h={33}>
          <FormLabel>API秘钥/密码:</FormLabel>
          <FormField />
        </FormRow>
        <FormRow $h={33}>
          <FormLabel>HTTPS CA文件:</FormLabel>
          <FormField />
          <FormButton $w={83} $ml={5} $gap={6}>
            <Wifi w={14} />
            浏览 ...
          </FormButton>
        </FormRow>
        <FormRow $h={25}>
          <FormLabel>忽略HTTPS证书吊销检查:</FormLabel>
          <Check $s={16} />
        </FormRow>
        <Note>HTTPS CA文件是可选的。只有在使用自签名证书进行HTTPS连接时才需要。</Note>
      </Group>
      <Confirm>确认</Confirm>
      <Grip>
        <Icon $w={8} viewBox="0 0 8 8" style={{ color: "#b5b5b5" }}>
          <path d="M6 1H8M3 4H5M6 4H8M0 7H2M3 7H5M6 7H8" strokeWidth="2" />
        </Icon>
      </Grip>
    </Dialog>
  </>
);

/* ---------- Step callouts ---------- */

const Callouts = styled.svg`
  position: absolute;
  z-index: 4;
  left: -1px;
  top: 0;
  width: 1920px;
  height: 1033px;
`;

const Steps = () => (
  <Callouts viewBox="0 0 1920 1033" fill={RED}>
    <path d="M531.500 130.500L542 121.300L543.300 125.300L615 111.300L543 131L543 134.300Z" />
    <circle cx="570.500" cy="146" r="17.500" />
    <path d="M867.500 551.700L881.400 527.700L884.800 533.300L1031 459.700L891 546L895 552Z" />
    <circle cx="1011.400" cy="492.500" r="17.500" />
    <g fill="#fff" fontFamily="Noto Serif CJK SC, Liberation Serif, serif" fontSize="24" textAnchor="middle">
      <text x="570.500" y="153.500">1</text>
      <text x="1011.400" y="500">2</text>
    </g>
  </Callouts>
);

export default function App() {
  return (
    <Page>
      <Global />
      <AppTitleBar />
      <AppNav />
      <Plate />
      <AppToolbar />
      <SettingsPanel />
      <PrinterDialog />
      <Steps />
    </Page>
  );
}
